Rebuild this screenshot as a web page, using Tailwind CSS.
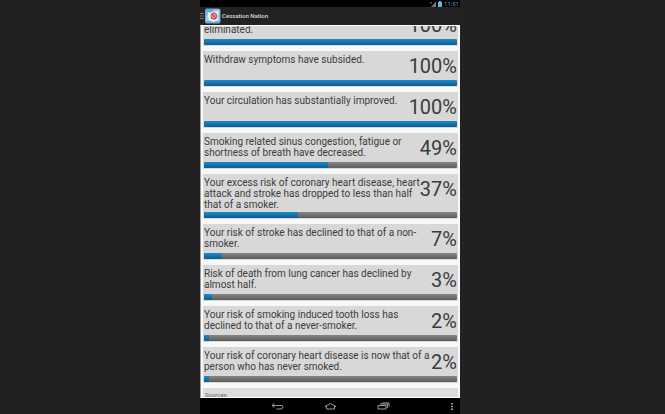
<!DOCTYPE html>
<html lang="en">
<head>
  <meta charset="UTF-8" />
  <meta name="viewport" content="width=device-width, initial-scale=1.0" />
  <title>Cessation Nation</title>
  <script src="https://cdn.jsdelivr.net/npm/@tailwindcss/browser@4"></script>
</head>
<body class="bg-[#212121] font-['Roboto',sans-serif] text-[#3c3c3c]">
  <div class="grid grid-cols-[40fr_52fr_41fr] h-screen overflow-hidden">
    <div class="col-start-2 min-w-0 h-screen flex flex-col bg-black">

      <!-- status bar -->
      <div class="h-[7px] shrink-0 flex items-center justify-end gap-[2px] pr-px text-[6px] leading-[7px] text-[#33a5cf]">
        <svg class="w-[6px] h-[6px]" viewBox="0 0 12 12"><path d="M12 1v11H2z" fill="#777"/><path d="M0 2h4v3H0z" fill="#555"/></svg>
        <svg class="w-[4px] h-[6px]" viewBox="0 0 8 12"><path d="M2 0h4v2h2v10H0V2h2z" fill="#5dbbe0"/></svg>
        <span>11:51</span>
      </div>

      <!-- action bar -->
      <header class="h-[18px] shrink-0 flex items-center bg-[#222] text-[#ddd]">
        <button class="w-[4px] h-[16px] flex items-center" aria-label="Open menu">
          <svg class="w-[4px] h-[6px]" viewBox="0 0 4 6"><path d="M0 .5h4M0 3h4M0 5.5h4" stroke="#777" stroke-width="1"/></svg>
        </button>
        <svg class="w-[16px] h-[16px] ml-px" viewBox="0 0 32 32">
          <rect x="0" y="1" width="31" height="30" rx="4" fill="#6da9d8"/>
          <path d="M2 16c6-6 9-4 12-9s10-5 15-3v22H2z" fill="#a9cfea"/>
          <path d="M5 8l13 2 9-4-2 19-9 3-9-5z" fill="#f3f3f5"/>
          <circle cx="18" cy="16" r="5.500" fill="#f2d5d8" stroke="#d6505c" stroke-width="2.500"/>
          <path d="M14 12l8 8" stroke="#d33c4b" stroke-width="2.500"/>
          <path d="M15 18l6-3M12 21l9 1" stroke="#8d5e64" stroke-width="2"/>
        </svg>
        <h1 class="ml-px text-[6px] leading-[8px] font-medium">Cessation Nation</h1>
      </header>

      <!-- progress list -->
      <main class="flex-1 min-h-0 overflow-hidden bg-[#f8f8f8] border-y border-l border-y-white border-l-[#999] px-[2px]">
        <ul id="goals" class="-mt-[16px] flex flex-col gap-[5px]"></ul>
        <section class="mt-[5px] h-[30px] bg-[#dcdcdc] px-[2px] pt-[3px]">
          <h2 class="text-[6px] leading-[7px] text-[#666]">Sources:</h2>
        </section>
      </main>

      <!-- navigation bar -->
      <nav class="relative h-[16px] shrink-0 flex items-center justify-center gap-[40px]">
        <button class="w-[13px]" aria-label="Back">
          <svg class="w-[13px] h-[8px]" viewBox="0 0 26 16" fill="none" stroke="#999" stroke-width="2"><path d="M7 3L2 7l5 4M2 7h18q4 0 4 3t-4 4h-9"/></svg>
        </button>
        <button class="w-[13px]" aria-label="Home">
          <svg class="w-[13px] h-[8px]" viewBox="0 0 26 16" fill="none" stroke="#999" stroke-width="2"><path d="M5 14H21V9h3L13 3 2 9h3z"/></svg>
        </button>
        <button class="w-[13px]" aria-label="Recent apps">
          <svg class="w-[13px] h-[8px]" viewBox="0 0 26 16" fill="none" stroke="#999" stroke-width="2"><path d="M2 7h16v7H2zM6 4h15v8M9 2h15v7"/></svg>
        </button>
        <button class="absolute right-[7px]" aria-label="More options">
          <svg class="w-[2px] h-[7px]" viewBox="0 0 2 7" fill="#999"><path d="M0 0h2v1.500H0zM0 2.700h2v1.500H0zM0 5.400h2v1.500H0z"/></svg>
        </button>
      </nav>
    </div>
  </div>

  <script>
    const goals = [
      { text: "<br>eliminated.", percent: 100 },
      { text: "Withdraw symptoms have subsided.", percent: 100 },
      { text: "Your circulation has substantially improved.", percent: 100 },
      { text: "Smoking related sinus congestion, fatigue or<br>shortness of breath have decreased.", percent: 49 },
      { text: "Your excess risk of coronary heart disease, heart<br>attack and stroke has dropped to less than half<br>that of a smoker.", percent: 37 },
      { text: "Your risk of stroke has declined to that of a non-<br>smoker.", percent: 7 },
      { text: "Risk of death from lung cancer has declined by<br>almost half.", percent: 3 },
      { text: "Your risk of smoking induced tooth loss has<br>declined to that of a never-smoker.", percent: 2 },
      { text: "Your risk of coronary heart disease is now that of a<br>person who has never smoked.", percent: 2 }
    ];

    document.getElementById("goals").innerHTML = goals.map(goal => `
      <li class="bg-[#d8d8d8] px-px pt-[3px] pb-px">
        <div class="flex justify-between min-h-[26px]">
          <p class="min-w-0 pb-[2px] text-[10px] leading-[11px] whitespace-nowrap">${goal.text}</p>
          <span class="shrink-0 text-[20px] leading-[24px]">${goal.percent}%</span>
        </div>
        <div class="h-[6px] rounded-[1px] overflow-hidden bg-linear-to-b from-[#858785] to-[#5c5e5c]" role="progressbar" aria-label="Progress" aria-valuenow="${goal.percent}">
          <div class="h-full bg-linear-to-b from-[#1d8acb] to-[#0d5c90]" style="width: ${goal.percent}%"></div>
        </div>
      </li>
    `).join("");
  </script>
</body>
</html>
